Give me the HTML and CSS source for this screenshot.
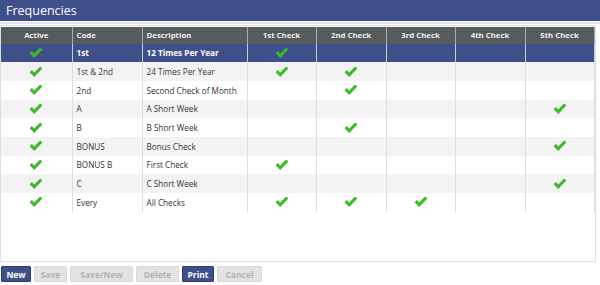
FILE: index.html
```html
<!DOCTYPE html>
<html>
<head>
<meta charset="utf-8">
<link rel="stylesheet" href="styles.css">
</head>
<body>
<svg width="0" height="0" class="defs">
  <defs>
    <symbol id="chk" viewBox="0 0 14 12">
      <path d="M0.6 6.2 L2.8 4.1 L5.2 6.4 L11.1 0.5 L13.4 2.6 L5.2 10.9 Z" fill="#3dba2b"/>
    </symbol>
  </defs>
</svg>
<div class="title">Frequencies</div>
<div class="rule"></div>
<div class="box">
  <table class="grid">
    <colgroup>
      <col class="c-act"><col class="c-code"><col class="c-desc">
      <col class="c-chk"><col class="c-chk2"><col class="c-chk"><col class="c-chk2"><col class="c-chk">
    </colgroup>
    <thead>
      <tr>
        <th class="ctr">Active</th><th>Code</th><th>Description</th>
        <th class="ctr">1st Check</th><th class="ctr">2nd Check</th><th class="ctr">3rd Check</th><th class="ctr">4th Check</th><th class="ctr">5th Check</th>
      </tr>
    </thead>
    <tbody>
      <tr class="sel">
        <td class="ctr"><svg class="ck"><use href="#chk"/></svg></td><td>1st</td><td>12 Times Per Year</td>
        <td class="ctr"><svg class="ck"><use href="#chk"/></svg></td><td></td><td></td><td></td><td></td>
      </tr>
      <tr class="alt">
        <td class="ctr"><svg class="ck"><use href="#chk"/></svg></td><td>1st &amp; 2nd</td><td>24 Times Per Year</td>
        <td class="ctr"><svg class="ck"><use href="#chk"/></svg></td><td class="ctr"><svg class="ck"><use href="#chk"/></svg></td><td></td><td></td><td></td>
      </tr>
      <tr>
        <td class="ctr"><svg class="ck"><use href="#chk"/></svg></td><td>2nd</td><td>Second Check of Month</td>
        <td></td><td class="ctr"><svg class="ck"><use href="#chk"/></svg></td><td></td><td></td><td></td>
      </tr>
      <tr class="alt">
        <td class="ctr"><svg class="ck"><use href="#chk"/></svg></td><td>A</td><td>A Short Week</td>
        <td></td><td></td><td></td><td></td><td class="ctr"><svg class="ck"><use href="#chk"/></svg></td>
      </tr>
      <tr>
        <td class="ctr"><svg class="ck"><use href="#chk"/></svg></td><td>B</td><td>B Short Week</td>
        <td></td><td class="ctr"><svg class="ck"><use href="#chk"/></svg></td><td></td><td></td><td></td>
      </tr>
      <tr class="alt">
        <td class="ctr"><svg class="ck"><use href="#chk"/></svg></td><td>BONUS</td><td>Bonus Check</td>
        <td></td><td></td><td></td><td></td><td class="ctr"><svg class="ck"><use href="#chk"/></svg></td>
      </tr>
      <tr>
        <td class="ctr"><svg class="ck"><use href="#chk"/></svg></td><td>BONUS B</td><td>First Check</td>
        <td class="ctr"><svg class="ck"><use href="#chk"/></svg></td><td></td><td></td><td></td><td></td>
      </tr>
      <tr class="alt">
        <td class="ctr"><svg class="ck"><use href="#chk"/></svg></td><td>C</td><td>C Short Week</td>
        <td></td><td></td><td></td><td></td><td class="ctr"><svg class="ck"><use href="#chk"/></svg></td>
      </tr>
      <tr>
        <td class="ctr"><svg class="ck"><use href="#chk"/></svg></td><td>Every</td><td>All Checks</td>
        <td class="ctr"><svg class="ck"><use href="#chk"/></svg></td><td class="ctr"><svg class="ck"><use href="#chk"/></svg></td><td class="ctr"><svg class="ck"><use href="#chk"/></svg></td><td></td><td></td>
      </tr>
    </tbody>
  </table>
</div>
<div class="actions">
  <button class="btn on">New</button>
  <button class="btn off w-save">Save</button>
  <button class="btn off w-savenew">Save/New</button>
  <button class="btn off w-del">Delete</button>
  <button class="btn on w-print">Print</button>
  <button class="btn off w-cancel">Cancel</button>
</div>
</body>
</html>
```

FILE: styles.css
```css
html, body {
  margin: 0;
  padding: 0;
  background: #ffffff;
}
body {
  width: 600px;
  height: 285px;
  overflow: hidden;
  font-family: "Open Sans", "Noto Sans", sans-serif;
  color: #333333;
}
.defs {
  position: absolute;
  width: 0;
  height: 0;
}
.title {
  height: 21px;
  background: #3e4f8a;
  color: #ffffff;
  font-size: 12.5px;
  line-height: 22px;
  padding-left: 6px;
}
.rule {
  height: 2px;
  margin-top: 1px;
  background: #e3e8f0;
}
.box {
  margin-top: 1px;
  width: 596px;
  height: 237px;
  box-sizing: border-box;
  border: 1px solid #d8dfea;
  padding: 1px 1px 0 0;
}
.grid {
  border-collapse: collapse;
  table-layout: fixed;
  width: 593px;
  font-size: 8.2px;
}
.c-act { width: 71px; }
.c-code { width: 70px; }
.c-desc { width: 105px; }
.c-chk { width: 69px; }
.c-chk2 { width: 70px; }
.grid th {
  height: 16.5px;
  padding: 0 0 0 4px;
  background: #565b5c;
  color: #eeeeee;
  font-weight: 700;
  font-size: 7.8px;
  text-align: left;
  border-left: 1px solid #a9acad;
  border-right: 1px solid #a9acad;
}
.grid td {
  height: 18.7px;
  padding: 0 0 0 4px;
  border-left: 1px solid #dedede;
  border-right: 1px solid #dedede;
  vertical-align: middle;
  white-space: nowrap;
}
.grid td:first-child, .grid th:first-child { border-left: none; }
.grid .ctr { text-align: center; padding-left: 0; }
.grid tr.alt td { background: #f3f3f3; }
.grid tr.sel td {
  background: #3e4f8a;
  color: #ffffff;
  font-weight: 700;
  border-left-color: #c9cdd8;
  border-right-color: #c9cdd8;
}
.ck {
  width: 14px;
  height: 12px;
  display: block;
  margin: 0 auto;
}
.actions {
  display: flex;
  gap: 3px;
  padding: 4px 0 0 1px;
}
.btn {
  height: 16px;
  box-sizing: border-box;
  margin: 0;
  padding: 0;
  font-family: "Open Sans", "Noto Sans", sans-serif;
  font-size: 8.5px;
  font-weight: 700;
  border-radius: 1px;
  width: 30px;
}
.btn.on {
  background: #3e4f8a;
  color: #ffffff;
  border: 1px solid #2e3d6e;
}
.btn.off {
  background: #e3e3e3;
  color: #b3b3b3;
  border: 1px solid #dadada;
}
.w-save { width: 33px; }
.w-savenew { width: 63px; }
.w-del { width: 43px; }
.w-print { width: 32px; }
.w-cancel { width: 45px; }
```
